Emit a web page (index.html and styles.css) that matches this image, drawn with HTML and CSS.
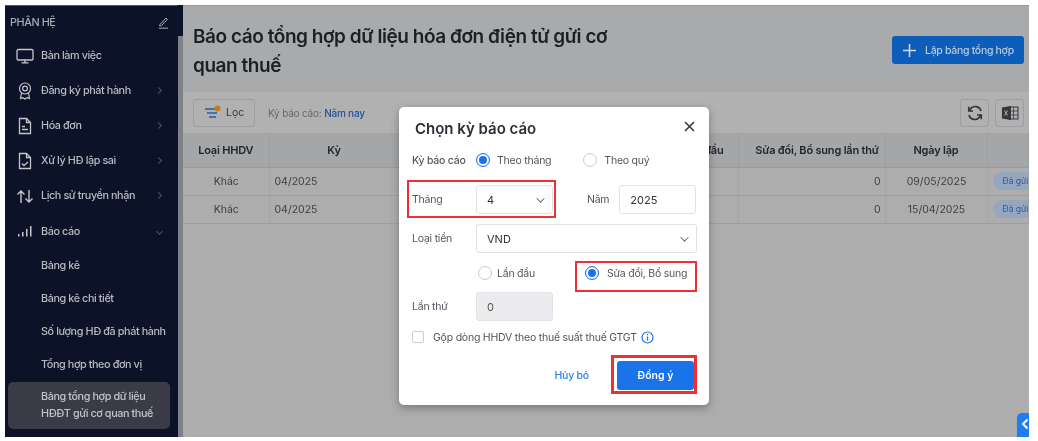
FILE: index.html
```html
<!DOCTYPE html>
<html lang="vi">
<head>
  <meta charset="UTF-8" />
  <title>Báo cáo tổng hợp dữ liệu hóa đơn điện tử gửi cơ quan thuế</title>
  <link rel="stylesheet" href="styles.css">
</head>
<body>

<div class="app">
  <aside class="sidebar">
    <div class="side-head">
      <span>PHÂN HỆ</span>
      <svg class="pen" width="11" height="13" viewBox="0 0 11 13" fill="none" stroke="#a9acb5" stroke-width="1"><path d="M2 8.500 8 2l1.400 1.300-6 6.400L1.600 10z"/><path d="M1 12.200h9"/></svg>
    </div>
    <nav class="menu">
      <a class="menu-item">
        <svg class="mi" width="18" height="18" viewBox="0 0 18 18" fill="none" stroke="#c4c6cc" stroke-width="1.300"><rect x="1" y="2.500" width="16" height="10.500" rx="1.200"/><path d="M9 13v2.500M5.500 15.800h7"/></svg>
        <span>Bàn làm việc</span>
      </a>
      <a class="menu-item">
        <svg class="mi" width="18" height="18" viewBox="0 0 18 18" fill="none" stroke="#c4c6cc" stroke-width="1.200"><circle cx="9" cy="6.500" r="5.500"/><circle cx="9" cy="6.500" r="2.400"/><path d="M5.500 11 4.500 16.500l2.200-.8L9 17l2.300-1.300 2.200.8L12.500 11"/></svg>
        <span>Đăng ký phát hành</span>
        <i class="chev"></i>
      </a>
      <a class="menu-item">
        <svg class="mi" width="18" height="18" viewBox="0 0 18 18" fill="none" stroke="#c4c6cc" stroke-width="1.300"><path d="M3.500 1.500h7l4 4v11h-11z"/><path d="M10.500 1.500v4h4M6 9.500h3M6 12.500h6"/></svg>
        <span>Hóa đơn</span>
        <i class="chev"></i>
      </a>
      <a class="menu-item">
        <svg class="mi" width="18" height="18" viewBox="0 0 18 18" fill="none" stroke="#c4c6cc" stroke-width="1.300"><path d="M3.500 1.500h7l4 4v11h-11z"/><path d="M10.500 1.500v4h4M6 11.500l2 2 4-3.500"/></svg>
        <span>Xử lý HĐ lập sai</span>
        <i class="chev"></i>
      </a>
      <a class="menu-item">
        <svg class="mi" width="18" height="18" viewBox="0 0 18 18" fill="none" stroke="#c4c6cc" stroke-width="1.400"><path d="M5 16V4M1.500 7.500 5 4l3.500 3.500M13 3v12M9.500 11.500 13 15l3.500-3.500"/></svg>
        <span>Lịch sử truyền nhận</span>
        <i class="chev"></i>
      </a>
      <a class="menu-item">
        <svg class="mi" width="18" height="18" viewBox="0 0 18 18" fill="#c4c6cc"><rect x="2" y="12" width="1.500" height="2.500"/><rect x="6" y="10" width="1.500" height="4.500"/><rect x="10" y="7" width="1.500" height="7.500"/><rect x="14" y="4" width="1.500" height="10.500"/></svg>
        <span>Báo cáo</span>
        <i class="chev open"></i>
      </a>
    </nav>
    <nav class="submenu">
      <a class="sub-item">Bảng kê</a>
      <a class="sub-item">Bảng kê chi tiết</a>
      <a class="sub-item">Số lượng HĐ đã phát hành</a>
      <a class="sub-item">Tổng hợp theo đơn vị</a>
      <a class="sub-item active">Bảng tổng hợp dữ liệu HĐĐT gửi cơ quan thuế</a>
    </nav>
  </aside>
  <div class="side-bar-track"></div>

  <main class="main">
    <header class="page-head">
      <h1>Báo cáo tổng hợp dữ liệu hóa đơn điện tử gửi cơ quan thuế</h1>
      <button class="btn-create">
        <svg width="15" height="15" viewBox="0 0 15 15" stroke="#d3dce8" stroke-width="1.500"><path d="M7.500 1v13M1 7.500h13"/></svg>
        Lập bảng tổng hợp
      </button>
    </header>

    <div class="toolbar">
      <button class="btn-filter">
        <svg width="18" height="15" viewBox="0 0 18 15" fill="none"><path d="M1 4h11M3 8h10M5 12h7" stroke="#1b5fb0" stroke-width="1.400"/><circle cx="13.500" cy="3.500" r="3" fill="#c97a1d"/></svg>
        Lọc
      </button>
      <span class="period">Kỳ báo cáo: <b>Năm nay</b></span>
      <div class="tools">
        <button class="btn-icon">
          <svg width="16" height="16" viewBox="0 0 16 16" fill="none" stroke="#33383f" stroke-width="1.700"><path d="M14 6A6 6 0 0 0 3.200 4.200L2 6M2 10a6 6 0 0 0 10.800 1.800L14 10"/><path d="M1.800 1.800V6H6M14.200 14.200V10H10"/></svg>
        </button>
        <button class="btn-icon">
          <svg width="18" height="16" viewBox="0 0 18 16"><rect x="8" y="2" width="9" height="12" fill="none" stroke="#33383f"/><path d="M12.500 2v12M8 6h9M8 10h9" stroke="#33383f" stroke-width=".8"/><path d="M1 2.500 10 1v14l-9-1.500z" fill="#33383f"/><path d="M3.500 5.500l3 5M6.500 5.500l-3 5" stroke="#b3b3b3"/></svg>
        </button>
      </div>
    </div>

    <table class="grid">
      <colgroup>
        <col class="c-type"><col class="c-period"><col class="c-rest"><col class="c-first"><col class="c-edit"><col class="c-date"><col class="c-status">
      </colgroup>
      <thead>
        <tr><th>Loại HHDV</th><th>Kỳ</th><th></th><th class="first-head">Lần đầu</th><th class="edit-head">Sửa đổi, Bổ sung lần thứ</th><th>Ngày lập</th><th></th></tr>
      </thead>
      <tbody>
        <tr><td class="center">Khác</td><td>04/2025</td><td></td><td></td><td class="num">0</td><td class="center">09/05/2025</td><td><span class="badge">Đã gửi</span></td></tr>
        <tr><td class="center">Khác</td><td>04/2025</td><td></td><td></td><td class="num">0</td><td class="center">15/04/2025</td><td><span class="badge">Đã gửi</span></td></tr>
      </tbody>
    </table>

    <button class="help-tab">
      <svg width="8" height="12" viewBox="0 0 8 12" fill="none" stroke="#fff" stroke-width="2"><path d="M6.500 1.500 2 6l4.500 4.500"/></svg>
    </button>
  </main>

  <div class="modal">
    <div class="modal-head">
      <h2>Chọn kỳ báo cáo</h2>
      <svg width="11" height="11" viewBox="0 0 11 11" stroke="#2f3a4c" stroke-width="1.600"><path d="M1 1l9 9M10 1l-9 9"/></svg>
    </div>
    <div class="form-row tall">
      <label class="lbl strong">Kỳ báo cáo</label>
      <span class="radio on"></span><span class="opt opt-month">Theo tháng</span>
      <span class="radio"></span><span class="opt">Theo quý</span>
    </div>
    <div class="form-row">
      <label class="lbl">Tháng</label>
      <div class="field small">4<i class="caret"></i></div>
      <label class="lbl-year">Năm</label>
      <div class="field small">2025</div>
    </div>
    <div class="form-row">
      <label class="lbl">Loại tiền</label>
      <div class="field wide">VND<i class="caret"></i></div>
    </div>
    <div class="form-row radios">
      <span class="radio"></span><span class="opt opt-first">Lần đầu</span>
      <span class="radio on"></span><span class="opt">Sửa đổi, Bổ sung</span>
    </div>
    <div class="form-row">
      <label class="lbl">Lần thứ</label>
      <div class="field small disabled">0</div>
    </div>
    <div class="check-row">
      <span class="check"></span>
      <span class="opt">Gộp dòng HHDV theo thuế suất thuế GTGT</span>
      <svg width="13" height="13" viewBox="0 0 13 13" fill="none" stroke="#1a73e8" stroke-width="1.200"><circle cx="6.500" cy="6.500" r="5.500"/><path d="M6.500 5.500v4M6.500 3v1.300"/></svg>
    </div>
    <div class="modal-foot">
      <a class="link-cancel">Hủy bỏ</a>
      <button class="btn-ok">Đồng ý</button>
    </div>
    <div class="mark mark-month"></div>
    <div class="mark mark-edit"></div>
    <div class="mark mark-ok"></div>
  </div>
</div>

</body>
</html>
```

FILE: styles.css
```css
* {
  box-sizing: border-box;
}

body {
  margin: 0;
  background: white;
  font-family: Inter, 'Noto Sans', sans-serif;
  overflow: hidden;
}

.app {
  position: relative;
  display: flex;
  width: 1024px;
  height: 432px;
  margin: 5px 0 0 5px;
  overflow: hidden;
  filter: blur(0.35px);
}

/* sidebar */
.sidebar {
  width: 173px;
  flex: none;
  background: #0c1227;
  color: #b9bbc2;
  font-size: 10.800px;
  font-weight: 500;
  letter-spacing: -0.4px;
}

.side-head {
  display: flex;
  justify-content: space-between;
  align-items: center;
  height: 33px;
  padding: 1px 9px 1px 5px;
  color: #a9acb5;
  border-top: 1px solid #555;
}

.menu-item {
  display: flex;
  align-items: center;
  height: 35.100px;
  padding-left: 11px;
}

.menu-item .mi {
  flex: none;
  margin-right: 7px;
}

.menu-item span {
  flex: 1;
}

.chev {
  width: 5px;
  height: 5px;
  margin-right: 17px;
  border-top: 1px solid #4e5362;
  border-right: 1px solid #4e5362;
  transform: rotate(45deg);
}

.chev.open {
  margin-right: 16px;
  transform: rotate(135deg);
}

.submenu {
  padding: 0 8px 0 3px;
}

.sub-item {
  display: flex;
  align-items: center;
  height: 33px;
  padding-left: 33px;
}

.sub-item.active {
  height: 47px;
  margin-top: 1px;
  padding: 0 8px 0 33px;
  background: #3b3a47;
  border-radius: 5px;
  line-height: 17px;
  color: #c3c4ca;
}

.side-bar-track {
  width: 5px;
  flex: none;
  background: #7f8186;
  border-top: 31px solid #0c1227;
}

/* main */
.main {
  position: relative;
  flex: 1;
  background: #adadae;
  border-top: 1px solid #9a9a9a;
  color: #2f3338;
}

.page-head {
  display: flex;
  justify-content: space-between;
  align-items: flex-start;
  height: 86px;
  padding: 16px 5px 0 10px;
  background: #a9aaab;
}

h1 {
  width: 440px;
  margin: 0;
  font-size: 19px;
  font-weight: 600;
  line-height: 29px;
  letter-spacing: -0.45px;
  color: #1c2026;
}

.btn-create {
  display: flex;
  align-items: center;
  gap: 8px;
  width: 132px;
  height: 28px;
  margin-top: 14px;
  padding: 0 0 0 10px;
  background: #0d5dbb;
  border: none;
  border-radius: 3px;
  color: #b9c8dc;
  font: 500 10.500px Inter, sans-serif;
  letter-spacing: -0.3px;
}

.toolbar {
  display: flex;
  align-items: center;
  height: 41px;
  padding: 0 5px 0 10px;
  background: #b1b1b2;
}

.btn-filter {
  display: flex;
  align-items: center;
  gap: 4px;
  width: 62px;
  height: 28px;
  padding: 0 0 0 10px;
  background: #b1b1b2;
  border: 1px solid #9d9e9f;
  border-radius: 3px;
  color: #35393f;
  font: 10.500px Inter, sans-serif;
}

.period {
  margin-left: 13px;
  font-size: 10px;
  letter-spacing: -0.2px;
  color: #65686d;
}

.period b {
  font-weight: 500;
  color: #25529a;
}

.tools {
  display: flex;
  gap: 6px;
  margin-left: auto;
}

.btn-icon {
  display: flex;
  align-items: center;
  justify-content: center;
  width: 29px;
  height: 28px;
  padding: 0;
  background: #b1b1b2;
  border: 1px solid #9d9e9f;
  border-radius: 3px;
}

.grid {
  width: 100%;
  border-collapse: collapse;
  table-layout: fixed;
  font-size: 10.500px;
}

.c-type { width: 86px; }
.c-period { width: 130px; }
.c-rest { width: 222px; }
.c-first { width: 117px; }
.c-edit { width: 147px; }
.c-date { width: 102px; }

.grid th {
  height: 34px;
  padding: 0;
  background: #a5a6a8;
  border-right: 1px solid #9c9d9f;
  border-bottom: 1px solid #979a9e;
  color: #22262c;
  font-weight: 600;
  font-size: 11px;
  letter-spacing: -0.2px;
  white-space: nowrap;
}

.grid .first-head {
  padding-right: 14px;
  text-align: right;
}

.grid .edit-head {
  padding-left: 11px;
}

.grid td {
  height: 28.300px;
  padding: 0 4px 0 5px;
  background: #adadae;
  border-right: 1px solid #a6a6a7;
  border-bottom: 1px solid #9e9fa0;
  color: #3c4046;
  white-space: nowrap;
  overflow: hidden;
}

.grid .center {
  text-align: center;
}

.grid .num {
  text-align: right;
}

.badge {
  display: inline-block;
  width: 48px;
  height: 18px;
  padding-left: 10px;
  background: #95a6bf;
  border-radius: 9px;
  color: #2f5aa0;
  font-size: 8.500px;
  line-height: 18px;
}

.help-tab {
  position: absolute;
  right: 0;
  bottom: 0;
  width: 12px;
  height: 24px;
  padding: 0 0 0 3px;
  background: #1f7df0;
  border: none;
  border-radius: 5px 0 0 0;
}

/* dialog */
.modal {
  position: absolute;
  left: 394px;
  top: 102px;
  width: 310px;
  height: 298px;
  padding: 0 12px 0 13px;
  background: white;
  border-radius: 5px;
  box-shadow: 0 3px 8px rgba(0,0,0,0.3);
  font-size: 10.500px;
  letter-spacing: -0.22px;
  color: #51565e;
}

.modal-head {
  display: flex;
  justify-content: space-between;
  align-items: center;
  height: 42px;
  padding: 1px 2px 0 3px;
}

.modal-head svg {
  margin-top: -5px;
}

h2 {
  margin: 0;
  font-size: 15px;
  font-weight: 600;
  letter-spacing: 0;
  color: #2b2f36;
}

.form-row {
  display: flex;
  align-items: center;
  height: 29px;
  margin-bottom: 10px;
  white-space: nowrap;
}

.form-row.tall {
  height: 22px;
  margin-bottom: 14px;
}

.form-row.radios {
  height: 20px;
  margin-bottom: 9px;
  padding-left: 66px;
}

.form-row.radios .radio {
  margin-right: 5px;
}

.form-row.radios .radio.on {
  margin-right: 8px;
}

.lbl {
  width: 64px;
  flex: none;
}

.lbl.strong {
  font-weight: 500;
}

.lbl-year {
  margin: 0 10px 0 34px;
}

.radio {
  width: 14px;
  height: 14px;
  flex: none;
  margin-right: 7px;
  background: white;
  border: 1px solid #c8cbd0;
  border-radius: 50%;
}

.radio.on {
  border: 1px solid #1a73e8;
  box-shadow: inset 0 0 0 2px white, inset 0 0 0 7px #1a73e8;
}

.opt-month {
  margin-right: 32px;
}

.opt-first {
  margin-right: 50px;
}

.field {
  position: relative;
  display: flex;
  align-items: center;
  height: 29px;
  padding-left: 10px;
  border: 1px solid #dfe2e7;
  border-radius: 3px;
  font-size: 11px;
  letter-spacing: 0;
  color: #2f3338;
}

.field.small {
  width: 77px;
}

.field.wide {
  width: 221px;
}

.field.disabled {
  background: #ececee;
  color: #555;
}

.caret {
  position: absolute;
  right: 8px;
  top: 9px;
  width: 7px;
  height: 7px;
  border-right: 1.300px solid #59606c;
  border-bottom: 1.300px solid #59606c;
  transform: rotate(45deg) scale(0.85);
}

.check-row {
  display: flex;
  align-items: center;
  height: 14px;
  margin-top: -1px;
  white-space: nowrap;
}

.check {
  width: 12px;
  height: 12px;
  margin-right: 9px;
  border: 1px solid #c8cbd0;
  border-radius: 2px;
}

.check-row svg {
  margin-left: 4px;
}

.modal-foot {
  display: flex;
  justify-content: flex-end;
  align-items: center;
  gap: 28px;
  margin-top: 17px;
  padding-right: 3px;
}

.link-cancel {
  color: #2a83ee;
  font-weight: 500;
}

.btn-ok {
  width: 77px;
  height: 29px;
  background: #1a73e8;
  border: none;
  border-radius: 3px;
  color: #fff;
  font: 600 10.500px Inter, sans-serif;
}

.mark {
  position: absolute;
  border: 2.500px solid #ee2f36;
}

.mark-month {
  left: 8px;
  top: 73px;
  width: 149px;
  height: 38px;
}

.mark-edit {
  left: 176px;
  top: 154px;
  width: 122px;
  height: 31px;
}

.mark-ok {
  left: 212px;
  top: 248px;
  width: 86px;
  height: 39px;
  border-width: 3px;
}
```
